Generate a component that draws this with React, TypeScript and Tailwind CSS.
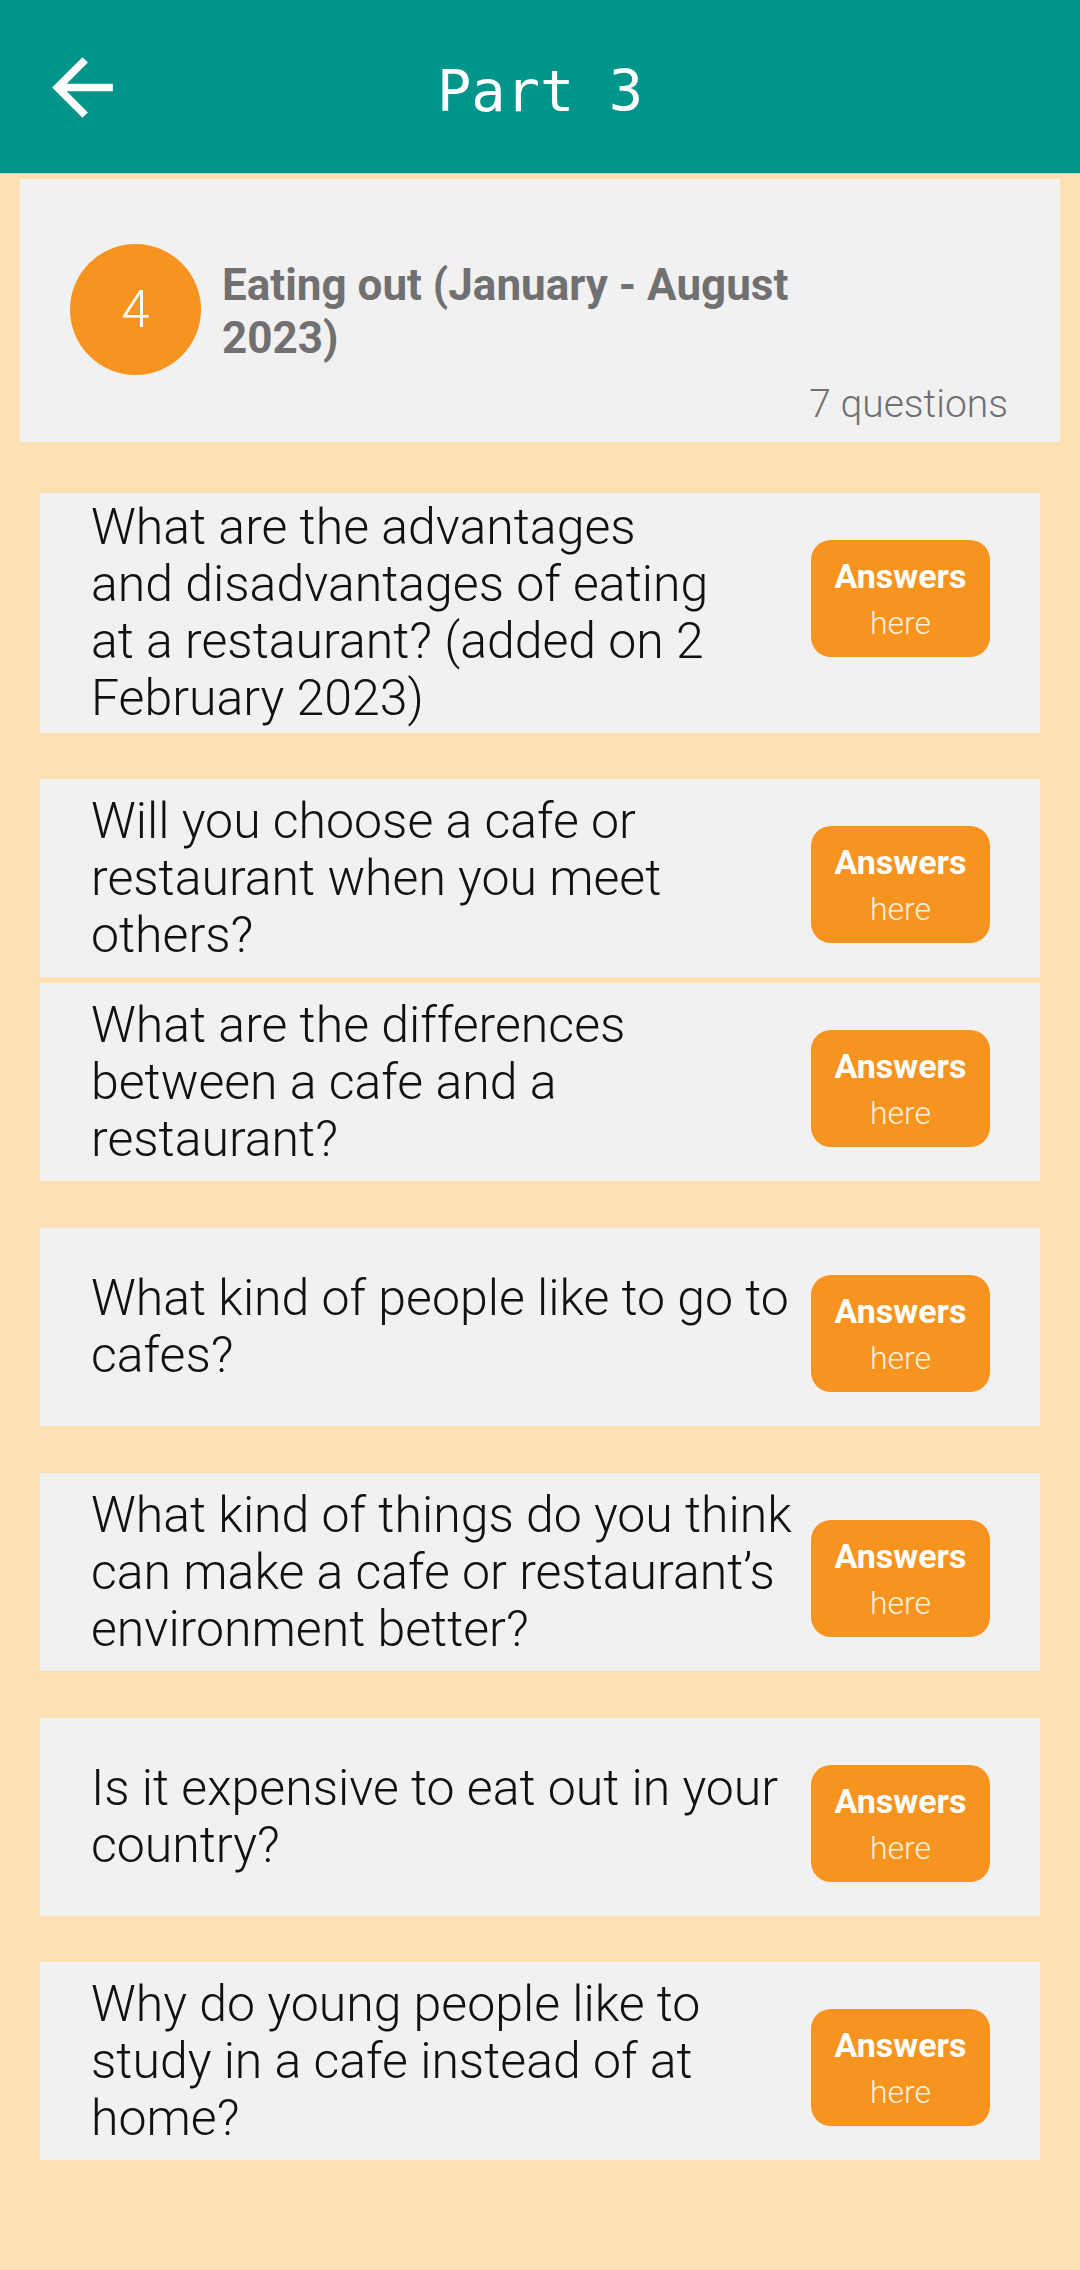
import React from "react";

const questions: { text: string; narrow?: boolean; gap: string }[] = [
  { text: "What are the advantages and disadvantages of eating at a restaurant? (added on 2 February 2023)", narrow: true, gap: "mb-[46px]" },
  { text: "Will you choose a cafe or restaurant when you meet others?", gap: "mb-[6px]" },
  { text: "What are the differences between a cafe and a restaurant?", gap: "mb-[47px]" },
  { text: "What kind of people like to go to cafes?", gap: "mb-[47px]" },
  { text: "What kind of things do you think can make a cafe or restaurant\u2019s environment better?", gap: "mb-[47px]" },
  { text: "Is it expensive to eat out in your country?", gap: "mb-[46px]" },
  { text: "Why do young people like to study in a cafe instead of at home?", gap: "mb-[45px]" },
];

function QuestionCard({ text, narrow, gap }: { text: string; narrow?: boolean; gap: string }) {
  return (
    <div className={`mx-[40px] ${gap} flex min-h-[198px] items-start bg-[#F1F1F1]`}>
      <div className="flex min-h-[198px] flex-1 items-center py-[6px] pl-[51px]">
        <p
          className={`${narrow ? "w-[625px]" : "w-[708px]"} text-[50px] font-light leading-[57px] text-[#111111]`}
        >
          {text}
        </p>
      </div>
      <button className="mr-[50px] mt-[47px] flex h-[117px] w-[179px] shrink-0 flex-col items-center justify-center rounded-[20px] bg-[#F7941F] pt-[3px]">
        <span className="text-[34px] font-bold leading-[47px] text-white">Answers</span>
        <span className="text-[32px] font-light leading-[47px] text-[#FFF1DC]">here</span>
      </button>
    </div>
  );
}

export default function App() {
  return (
    <div className="min-h-[2270px] w-full bg-[#FFE0B2]" style={{ fontFamily: "Roboto, 'Noto Sans', sans-serif" }}>
      <header className="grid h-[174px] grid-cols-[1fr_auto_1fr] items-center border-b border-[#C8DDB8] bg-[#00958A]">
        <div className="pl-[37px] pt-[1px]">
          <svg width="91" height="91" viewBox="0 0 24 24" fill="#FFFFFF">
            <path d="M20 11H7.83l5.59-5.59L12 4l-8 8 8 8 1.41-1.41L7.83 13H20v-2z" />
          </svg>
        </div>
        <h1
          className="pt-[10px] text-[57px] font-normal leading-none text-white"
          style={{ fontFamily: "'DejaVu Sans Mono', 'Liberation Mono', monospace" }}
        >
          Part 3
        </h1>
        <div />
      </header>

      <section className="mx-[20px] mt-[5px] flex h-[263px] flex-col bg-[#F1F1F1] pl-[50px] pr-[52px] pt-[65px]">
        <div className="flex items-center">
          <div className="flex h-[131px] w-[131px] shrink-0 items-center justify-center rounded-full bg-[#F7941F]">
            <span className="text-[51px] font-light leading-none text-white">4</span>
          </div>
          <h2 className="ml-[21px] w-[620px] pt-[4px] text-[44px] font-bold leading-[53px] text-[#707070]">
            Eating out (January - August 2023)
          </h2>
        </div>
        <p className="mt-[7px] text-right text-[39px] font-light leading-[45px] text-[#707070]">7 questions</p>
      </section>

      <div className="mt-[51px] flex flex-col">
        {questions.map((q, i) => (
          <QuestionCard key={i} text={q.text} narrow={q.narrow} gap={q.gap} />
        ))}
      </div>
    </div>
  );
}
